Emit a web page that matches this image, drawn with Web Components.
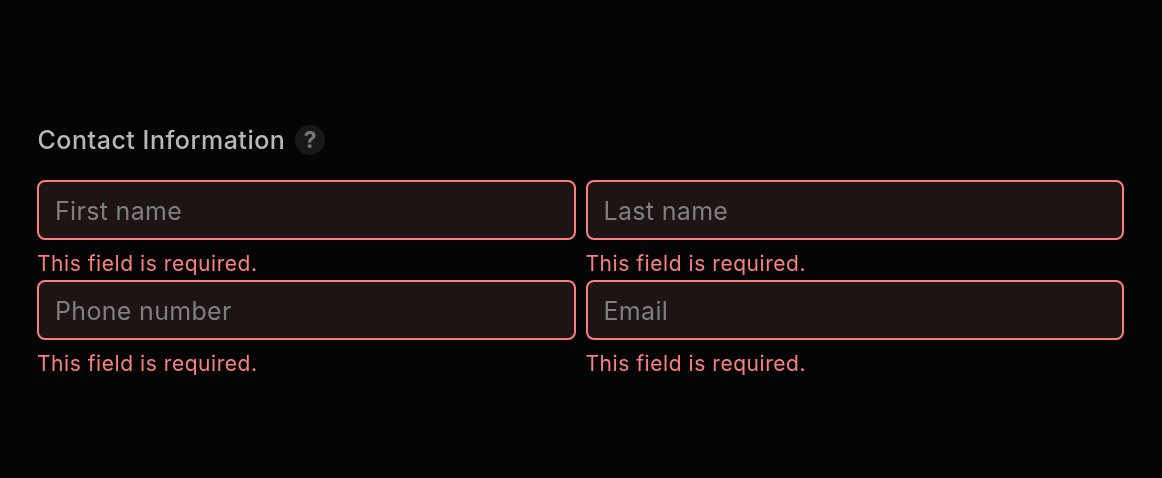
<!DOCTYPE html>
<html>
<head>
<meta charset="utf-8">
<style>
  html, body { margin: 0; padding: 0; background: #050506; }
  body { height: 478px; overflow: hidden; font-family: Inter, "Liberation Sans", sans-serif; }
</style>
</head>
<body>
<contact-form heading="Contact Information">
  <form-field placeholder="First name" error="This field is required."></form-field>
  <form-field placeholder="Last name" error="This field is required."></form-field>
  <form-field placeholder="Phone number" error="This field is required."></form-field>
  <form-field placeholder="Email" error="This field is required."></form-field>
</contact-form>
<script>
class FormField extends HTMLElement {
  constructor() {
    super();
    this.attachShadow({ mode: 'open' });
  }

  connectedCallback() {
    const placeholder = this.getAttribute('placeholder') || '';
    const error = this.getAttribute('error') || '';
    this.shadowRoot.innerHTML = `
      <style>
        :host { display: block; height: 100px; }
        .box {
          box-sizing: border-box;
          height: 60px;
          border: 2px solid #fa8080;
          border-radius: 8px;
          background: #1e1414;
          padding: 2px 16px 0;
          display: flex;
          align-items: center;
          font-size: 25px;
          letter-spacing: 0.32px;
          color: #7f7f7f;
        }
        .error {
          margin-top: 10px;
          font-size: 21px;
          line-height: 28px;
          letter-spacing: 0.55px;
          color: #fa8080;
        }
      </style>
      <div class="box">${placeholder}</div>
      <div class="error">${error}</div>
    `;
  }
}

class HelpBadge extends HTMLElement {
  constructor() {
    super();
    this.attachShadow({ mode: 'open' });
    this.shadowRoot.innerHTML = `
      <style>
        :host {
          display: flex;
          width: 30px;
          height: 30px;
          border-radius: 50%;
          background: #181818;
          color: #757575;
          align-items: center;
          justify-content: center;
          font-size: 23px;
          font-weight: 700;
        }
      </style>
      ?
    `;
  }
}

class ContactForm extends HTMLElement {
  constructor() {
    super();
    this.attachShadow({ mode: 'open' });
  }

  connectedCallback() {
    this.shadowRoot.innerHTML = `
      <style>
        :host { display: block; padding: 124px 38px 0 37px; will-change: opacity; }
        .head {
          display: flex;
          align-items: center;
          gap: 10px;
          height: 32px;
          margin-bottom: 24px;
          padding-left: 0.5px;
          font-size: 25px;
          font-weight: 500;
          letter-spacing: 0.52px;
          color: #b8b8b8;
        }
        .grid {
          display: grid;
          grid-template-columns: 1fr 1fr;
          column-gap: 10px;
        }
      </style>
      <div class="head"><span>${this.getAttribute('heading') || ''}</span><help-badge></help-badge></div>
      <div class="grid"><slot></slot></div>
    `;
  }
}

customElements.define('form-field', FormField);
customElements.define('help-badge', HelpBadge);
customElements.define('contact-form', ContactForm);
</script>
</body>
</html>
